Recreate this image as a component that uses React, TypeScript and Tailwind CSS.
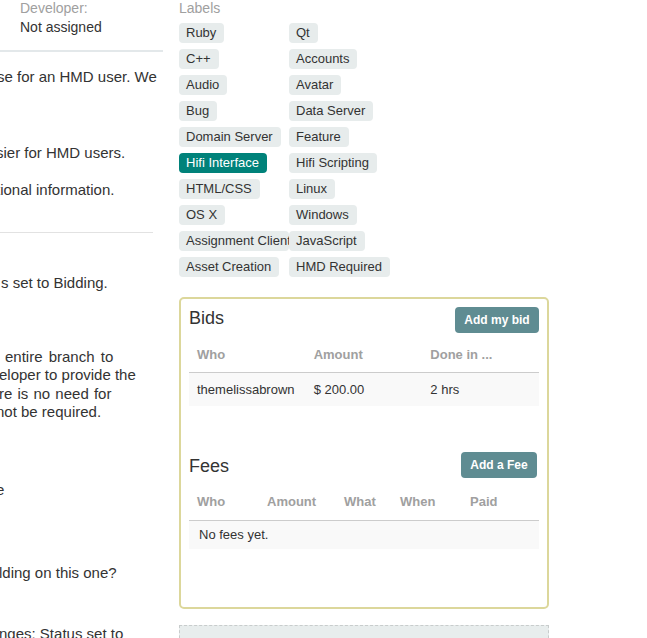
import React from "react";

const leftTags = ["Ruby", "C++", "Audio", "Bug", "Domain Server", "Hifi Interface", "HTML/CSS", "OS X", "Assignment Client", "Asset Creation"];
const rightTags = ["Qt", "Accounts", "Avatar", "Data Server", "Feature", "Hifi Scripting", "Linux", "Windows", "JavaScript", "HMD Required"];

function Tag({ name }: { name: string }) {
  const active = name === "Hifi Interface";
  return (
    <div className="h-[26px]">
      <span
        className={
          "inline-block max-w-[110px] overflow-hidden whitespace-nowrap h-[20px] leading-[20px] pl-[7px] pr-[8px] rounded-[4px] text-[13px] align-top " +
          (active ? "bg-[#00827a] text-white" : "bg-[#e7ecec] text-[#333]")
        }
      >
        {name}
      </span>
    </div>
  );
}

export default function App() {
  return (
    <div className="flex items-start bg-white h-[638px] overflow-hidden text-[#333] text-[14px]" style={{ fontFamily: '"Liberation Sans", Arial, sans-serif' }}>
      {/* Left column */}
      <div className="w-[163px] shrink-0 whitespace-nowrap overflow-hidden">
        <div className="-mt-[1px] h-[18px] leading-[18px] pl-[20px] text-[#a0a0a0]">Developer:</div>
        <div className="mt-[1px] h-[18px] leading-[18px] pl-[20px]">Not assigned</div>
        <div className="mt-[14px] h-[2px] w-[163px] bg-[#e3e8ea]" />
        <div className="text-[15px] leading-[18px]">
          <div className="mt-[16px] h-[18px] -ml-[3px]">se for an HMD user. We</div>
          <div className="mt-[58px] h-[18px] -ml-[4px]">sier for HMD users.</div>
          <div className="mt-[19px] h-[18px] -ml-[4px]">tional information.</div>
        </div>
        <div className="mt-[33px] h-[1px] w-[153px] bg-[#e2e2e2]" />
        <div className="text-[15px] leading-[18px]">
          <div className="mt-[41px] h-[18px] pl-[1px]">s set to Bidding.</div>
          <div className="mt-[56px] leading-[18.4px]">
            <div className="pl-[5px] [word-spacing:2px]">entire branch to</div>
            <div className="-ml-[1px]">eloper to provide the</div>
            <div className="-ml-[1px] [word-spacing:1px]">re is no need for</div>
            <div className="-ml-[4px]">not be required.</div>
          </div>
          <div className="mt-[59px] h-[18px] -ml-[4px]">e</div>
          <div className="mt-[65px] h-[18px] -ml-[1px]">lding on this one?</div>
          <div className="mt-[43px] h-[18px] -ml-[1px]">nges: Status set to</div>
        </div>
      </div>

      {/* Right column */}
      <div className="ml-[16px] w-[370px] shrink-0">
        <div className="-mt-[1px] h-[18px] leading-[18px] text-[#a0a0a0]">Labels</div>
        <div className="mt-[6px] grid grid-cols-[110px_110px]">
          <div>
            {leftTags.map((t) => (
              <Tag key={t} name={t} />
            ))}
          </div>
          <div>
            {rightTags.map((t) => (
              <Tag key={t} name={t} />
            ))}
          </div>
        </div>

        {/* Bids & Fees box */}
        <div className="mt-[14px] w-[370px] h-[312px] border-2 border-[#dcd79b] rounded-[5px] px-[8px] pt-[8px]">
          <div className="flex items-center justify-between h-[26px]">
            <div className="text-[18px] leading-[22px] -mt-[4px] text-[#333]">Bids</div>
            <button className="w-[84px] h-[26px] rounded-[4px] bg-[#5f8c92] text-white font-bold text-[12px]">Add my bid</button>
          </div>
          <div className="mt-[5px] w-[350px] text-[13px]">
            <div className="grid grid-cols-3 h-[35px] items-center border-b border-[#cccccc] font-bold text-[#a0a0a0]">
              <div className="pl-[8px]">Who</div>
              <div className="pl-[8px]">Amount</div>
              <div className="pl-[8px]">Done in ...</div>
            </div>
            <div className="grid grid-cols-3 h-[33px] items-center bg-[#f9f9f9] text-[#333]">
              <div className="pl-[8px]">themelissabrown</div>
              <div className="pl-[8px]">$ 200.00</div>
              <div className="pl-[8px]">2 hrs</div>
            </div>
          </div>

          <div className="mt-[46px] flex items-center justify-between h-[26px]">
            <div className="text-[18px] leading-[22px] mt-[1px] text-[#333]">Fees</div>
            <button className="mr-[2px] w-[76px] h-[26px] rounded-[4px] bg-[#5f8c92] text-white font-bold text-[12px]">Add a Fee</button>
          </div>
          <div className="mt-[6px] w-[350px] text-[13px]">
            <div className="grid grid-cols-[70px_77px_56px_70px_77px] h-[37px] items-center border-b border-[#cccccc] font-bold text-[#a0a0a0]">
              <div className="pl-[8px]">Who</div>
              <div className="pl-[8px]">Amount</div>
              <div className="pl-[8px]">What</div>
              <div className="pl-[8px]">When</div>
              <div className="pl-[8px]">Paid</div>
            </div>
            <div className="h-[28px] flex items-center bg-[#f9f9f9] pl-[10px] text-[#333]">No fees yet.</div>
          </div>
        </div>

        <div className="mt-[16px] w-[370px] h-[60px] border border-dashed border-[#c8cccc] bg-[#e8eded]" />
      </div>
    </div>
  );
}
